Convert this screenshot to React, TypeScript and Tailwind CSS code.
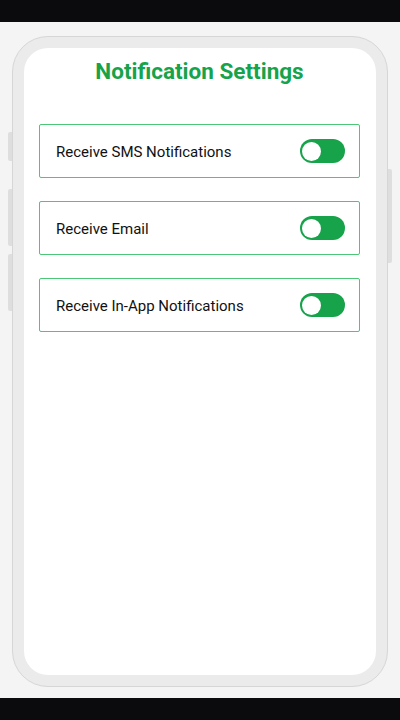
import React from "react";

const items = ["Receive SMS Notifications", "Receive Email", "Receive In-App Notifications"];

function Toggle() {
  return (
    <div className="flex h-[24px] w-[45px] items-center rounded-full bg-[#16a34a] px-[2px]">
      <div className="h-[19px] w-[19px] rounded-full bg-white" />
    </div>
  );
}

export default function App() {
  return (
    <div className="flex h-[720px] w-[400px] flex-col bg-[#0b0b0d]" style={{ fontFamily: "Roboto, 'Noto Sans', sans-serif" }}>
      <div className="h-[22px] shrink-0" />
      <div className="relative flex h-[676px] shrink-0 flex-col items-center bg-[#f4f4f4] pt-[14px]">
        {/* side buttons */}
        <div className="absolute left-[8px] top-[110px] h-[29px] w-[4px] rounded-l-[2px] bg-[#dedede]" />
        <div className="absolute left-[8px] top-[167px] h-[57px] w-[4px] rounded-l-[2px] bg-[#dedede]" />
        <div className="absolute left-[8px] top-[232px] h-[57px] w-[4px] rounded-l-[2px] bg-[#dedede]" />
        <div className="absolute left-[388px] top-[147px] h-[94px] w-[4px] rounded-r-[2px] bg-[#dedede]" />
        <div className="flex h-[651px] w-[376px] flex-col rounded-[36px] border border-[#d6d6d6] bg-[#ebebeb] p-[11px]">
          <div className="flex flex-1 flex-col rounded-[24px] bg-white pl-[15px] pr-[16px] pt-[9px]">
            <h1 className="mb-[39px] text-center text-[22.5px] font-bold leading-[28px] text-[#16a34a]">
              Notification Settings
            </h1>
            <div className="flex flex-col gap-[23px]">
              {items.map((t) => (
                <div
                  key={t}
                  className="flex h-[54px] items-center justify-between rounded-[2px] border border-[#4cc777] pl-[16px] pr-[14px]"
                >
                  <span className="pt-[2px] text-[15px] leading-[20px] text-[#111111]">{t}</span>
                  <Toggle />
                </div>
              ))}
            </div>
          </div>
        </div>
      </div>
      <div className="flex-1" />
    </div>
  );
}
